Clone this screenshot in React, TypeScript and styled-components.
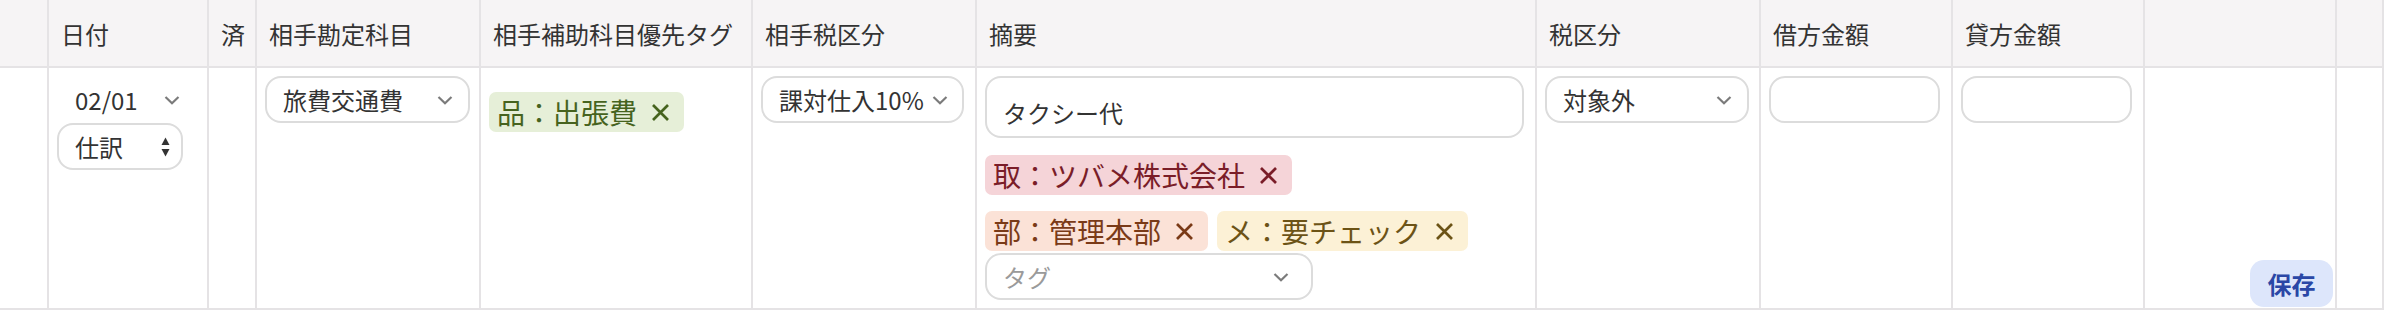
import React from "react";
import styled, { createGlobalStyle } from "styled-components";

const GlobalStyle = createGlobalStyle`
  html, body {
    margin: 0;
    padding: 0;
    background: #ffffff;
  }
  body {
    font-family: "Noto Sans CJK JP", "Noto Sans", sans-serif;
    color: #333333;
  }
`

const BORDER = "#e5e3e5"

const Table = styled.div`
  display: grid;
  grid-template-columns: 49px 160px 48px 224px 272px 224px 560px 224px 192px 192px 192px 47px;
  width: 2384px;
`

const HeaderCell = styled.div`
  box-sizing: border-box;
  height: 68px;
  display: flex;
  align-items: center;
  padding: 0 12px;
  background: #f6f4f5;
  border-right: 2px solid ${BORDER};
  border-bottom: 2px solid ${BORDER};
  font-size: 24px;
  color: #333333;
  white-space: nowrap;
  overflow: hidden;
`

const BodyCell = styled.div`
  box-sizing: border-box;
  height: 242px;
  display: flex;
  flex-direction: column;
  align-items: flex-start;
  padding: 8px;
  border-right: 2px solid ${BORDER};
  border-bottom: 2px solid ${BORDER};
`

const ActionCell = styled(BodyCell)`
  justify-content: flex-end;
  align-items: flex-end;
  padding: 8px 2px 1px 8px;
`

interface SelectBoxProps {
  $width: number
  $borderless?: boolean
  $placeholder?: boolean
  $padRight?: number
}

const SelectBox = styled.div<SelectBoxProps>`
  box-sizing: border-box;
  width: ${({ $width }) => $width}px;
  height: 47px;
  display: flex;
  align-items: center;
  justify-content: space-between;
  padding: 0 ${({ $padRight }) => $padRight ?? 15}px 0 16px;
  border: 2px solid ${({ $borderless }) => ($borderless ? "transparent" : "#dcdcdc")};
  border-radius: 16px;
  background: #ffffff;
  font-size: 24px;
  color: ${({ $placeholder }) => ($placeholder ? "#9a9a9a" : "#333333")};
  white-space: nowrap;
`

interface FieldProps {
  $width: number
  $height: number
}

const Field = styled.input<FieldProps>`
  box-sizing: border-box;
  width: ${({ $width }) => $width}px;
  height: ${({ $height }) => $height}px;
  padding: 10px 16px 0;
  border: 2px solid #dcdcdc;
  border-radius: 16px;
  background: #ffffff;
  font-family: "Noto Sans CJK JP", "Noto Sans", sans-serif;
  font-size: 24px;
  color: #333333;
  outline: none;
`

const TagList = styled.div`
  display: flex;
  flex-wrap: wrap;
  column-gap: 9px;
  row-gap: 16px;
  margin-top: 17px;
  width: 520px;
`

const TagHolder = styled.div`
  margin-top: 16px;
`

const tagColors = {
  green: { bg: "#e6efd8", fg: "#46631e" },
  red: { bg: "#f5d4d8", fg: "#7a1d28" },
  orange: { bg: "#fbe2d7", fg: "#7a3a17" },
  yellow: { bg: "#fcf1d6", fg: "#6c5316" },
}

type TagTone = keyof typeof tagColors

const Tag = styled.span<{ $tone: TagTone }>`
  display: inline-flex;
  align-items: center;
  gap: 14px;
  height: 40px;
  padding: 0 14px 0 8px;
  border-radius: 7px;
  background: ${({ $tone }) => tagColors[$tone].bg};
  color: ${({ $tone }) => tagColors[$tone].fg};
  font-size: 28px;
  line-height: 40px;
  white-space: nowrap;
`

const TagSelectWrap = styled.div`
  margin-top: 2px;
`

const SaveButton = styled.button`
  width: 83px;
  height: 47px;
  border: none;
  border-radius: 14px;
  background: #dde6fb;
  color: #2a47a6;
  font-family: "Noto Sans CJK JP", "Noto Sans", sans-serif;
  font-size: 24px;
  font-weight: 700;
  padding: 0;
  cursor: pointer;
`

function Chevron() {
  return (
    <svg width="16" height="10" viewBox="0 0 16 10" fill="none">
      <polyline points="1.5,2 8,8.2 14.5,2" stroke="#7b7b7b" strokeWidth="2.2" />
    </svg>
  )
}

function UpDown() {
  return (
    <svg width="9" height="20" viewBox="0 0 9 20">
      <polygon points="0.5,8 4.5,0.5 8.5,8" fill="#333333" />
      <polygon points="0.5,12 8.5,12 4.5,19.5" fill="#333333" />
    </svg>
  )
}

function Cross() {
  return (
    <svg width="19" height="19" viewBox="0 0 19 19" fill="none">
      <path d="M2 2 L17 17 M17 2 L2 17" stroke="currentColor" strokeWidth="2.7" />
    </svg>
  )
}

interface SelectProps {
  value: string
  width: number
  borderless?: boolean
  placeholder?: boolean
  padRight?: number
  stepper?: boolean
}

function Select({ value, width, borderless, placeholder, padRight, stepper }: SelectProps) {
  return (
    <SelectBox $width={width} $borderless={borderless} $placeholder={placeholder} $padRight={padRight}>
      <span>{value}</span>
      {stepper ? <UpDown /> : <Chevron />}
    </SelectBox>
  )
}

function TagChip({ tone, label }: { tone: TagTone; label: string }) {
  return (
    <Tag $tone={tone}>
      <span>{label}</span>
      <Cross />
    </Tag>
  )
}

const headers = ["", "日付", "済", "相手勘定科目", "相手補助科目優先タグ", "相手税区分", "摘要", "税区分", "借方金額", "貸方金額", "", ""]

export default function App() {
  return (
    <>
      <GlobalStyle />
      <Table>
        {headers.map((h, i) => (
          <HeaderCell key={i}>{h}</HeaderCell>
        ))}

        <BodyCell />
        <BodyCell>
          <Select value="02/01" width={126} borderless padRight={1} />
          <Select value="仕訳" width={126} padRight={11} stepper />
        </BodyCell>
        <BodyCell />
        <BodyCell>
          <Select value="旅費交通費" width={205} />
        </BodyCell>
        <BodyCell>
          <TagHolder>
            <TagChip tone="green" label="品：出張費" />
          </TagHolder>
        </BodyCell>
        <BodyCell>
          <Select value="課対仕入10%" width={203} padRight={14} />
        </BodyCell>
        <BodyCell>
          <Field $width={539} $height={63} defaultValue="タクシー代" />
          <TagList>
            <TagChip tone="red" label="取：ツバメ株式会社" />
            <TagChip tone="orange" label="部：管理本部" />
            <TagChip tone="yellow" label="メ：要チェック" />
          </TagList>
          <TagSelectWrap>
            <Select value="タグ" width={328} placeholder padRight={22} />
          </TagSelectWrap>
        </BodyCell>
        <BodyCell>
          <Select value="対象外" width={204} />
        </BodyCell>
        <BodyCell>
          <Field $width={171} $height={47} />
        </BodyCell>
        <BodyCell>
          <Field $width={171} $height={47} />
        </BodyCell>
        <ActionCell>
          <SaveButton>保存</SaveButton>
        </ActionCell>
        <BodyCell />
      </Table>
    </>
  )
}
